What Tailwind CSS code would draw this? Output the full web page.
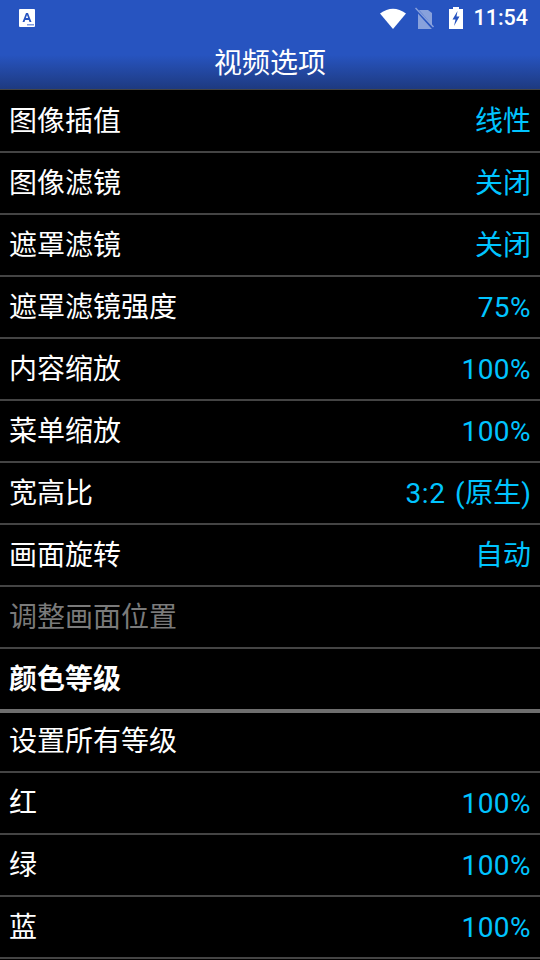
<!DOCTYPE html>
<html lang="zh-CN"><head><meta charset="utf-8"><script src="https://cdn.jsdelivr.net/npm/@tailwindcss/browser@4"></script></head>
<body class="bg-black">
<div class="w-[540px] h-[960px] overflow-hidden bg-black text-white text-[28px] font-['Roboto','Noto_Sans_CJK_SC',sans-serif]">
<header class="h-[90px] flex flex-col bg-[linear-gradient(to_bottom,#2754c0_0,#2754c0_55px,#1e3a80_89px)] border-b border-[#444]">
 <div class="h-[36px] flex items-center pl-[19px] pr-[12px]">
  <svg class="w-[16px] h-[18px]" viewBox="0 0 16 18"><rect width="16" height="18" rx="1" fill="#fff"/><path d="M3.5 13 L7 4 H9 L12.5 13 H10.5 L9.8 11 H6.2 L5.5 13 Z M6.9 9 H9.1 L8 6 Z" fill="#2754c0" fill-rule="evenodd"/><path d="M8 15h7v1.5H8z" fill="#7f9ade"/></svg>
  <div class="ml-auto flex items-center">
   <svg class="w-[26px] h-[21px]" viewBox="0 0 26 21"><path d="M0 5.5 Q13 -4 26 5.5 L13 21 Z" fill="#fff"/></svg>
   <svg class="ml-[9px] w-[20px] h-[22px]" viewBox="0 0 20 22"><path d="M3 3h10l4 3v16H3z" fill="#fff" fill-opacity=".45"/><path d="M1 2 L18 21" stroke="#2754c0" stroke-width="3"/><path d="M0.5 1 L18.5 20" stroke="#fff" stroke-opacity=".45" stroke-width="1.5"/></svg>
   <svg class="ml-[14px] w-[14px] h-[22px]" viewBox="0 0 14 22"><path d="M4 0h6v2h4v20H0V2h4z" fill="#fff"/><path d="M8.5 4 L3.5 12.5 H6.5 L5 19 L10.5 9.5 H7.5 Z" fill="#2754c0"/></svg>
   <span class="ml-[10px] text-[21.5px] font-medium leading-none">11:54</span>
  </div>
 </div>
 <h1 class="h-[53px] pt-[2px] flex items-center justify-center font-normal text-[28px]">视频选项</h1>
</header>
<main class="flex flex-col mt-px">
 <div class="h-[62px] pt-[1px] flex items-center justify-between pl-[9px] pr-[9px] border-b-2 border-[#444]"><span>图像插值</span><span class="text-[#00c4ff]">线性</span></div>
 <div class="h-[62px] pt-[1px] flex items-center justify-between pl-[9px] pr-[9px] border-b-2 border-[#444]"><span>图像滤镜</span><span class="text-[#00c4ff]">关闭</span></div>
 <div class="h-[62px] pt-[1px] flex items-center justify-between pl-[9px] pr-[9px] border-b-2 border-[#444]"><span>遮罩滤镜</span><span class="text-[#00c4ff]">关闭</span></div>
 <div class="h-[62px] pt-[1px] flex items-center justify-between pl-[9px] pr-[9px] border-b-2 border-[#444]"><span>遮罩滤镜强度</span><span class="text-[#00c4ff] tracking-[0.45px]">75%</span></div>
 <div class="h-[62px] pt-[1px] flex items-center justify-between pl-[9px] pr-[9px] border-b-2 border-[#444]"><span>内容缩放</span><span class="text-[#00c4ff] tracking-[0.45px]">100%</span></div>
 <div class="h-[62px] pt-[1px] flex items-center justify-between pl-[9px] pr-[9px] border-b-2 border-[#444]"><span>菜单缩放</span><span class="text-[#00c4ff] tracking-[0.45px]">100%</span></div>
 <div class="h-[62px] pt-[1px] flex items-center justify-between pl-[9px] pr-[9px] border-b-2 border-[#444]"><span>宽高比</span><span class="text-[#00c4ff] whitespace-pre [word-spacing:2px]"><span class="tracking-[0.6px]">3:2 (</span>原生)</span></div>
 <div class="h-[62px] pt-[1px] flex items-center justify-between pl-[9px] pr-[9px] border-b-2 border-[#444]"><span>画面旋转</span><span class="text-[#00c4ff]">自动</span></div>
 <div class="h-[62px] pt-[1px] flex items-center justify-between pl-[9px] pr-[9px] border-b-2 border-[#444]"><span class="text-[#7a7a7a]">调整画面位置</span></div>
 <div class="h-[64px] pt-[1px] flex items-center justify-between pl-[9px] pr-[9px] border-b-4 border-[#6e6e6e]"><span class="font-bold">颜色等级</span></div>
 <div class="h-[60px] flex items-center justify-between pl-[9px] pr-[9px] border-b-2 border-[#444]"><span>设置所有等级</span></div>
 <div class="h-[62px] pt-[1px] flex items-center justify-between pl-[9px] pr-[9px] border-b-2 border-[#444]"><span>红</span><span class="text-[#00c4ff] tracking-[0.45px]">100%</span></div>
 <div class="h-[62px] pt-[1px] flex items-center justify-between pl-[9px] pr-[9px] border-b-2 border-[#444]"><span>绿</span><span class="text-[#00c4ff] tracking-[0.45px]">100%</span></div>
 <div class="h-[62px] pt-[1px] flex items-center justify-between pl-[9px] pr-[9px] border-b-2 border-[#444]"><span>蓝</span><span class="text-[#00c4ff] tracking-[0.45px]">100%</span></div>
</main>
</div>
</body></html>
